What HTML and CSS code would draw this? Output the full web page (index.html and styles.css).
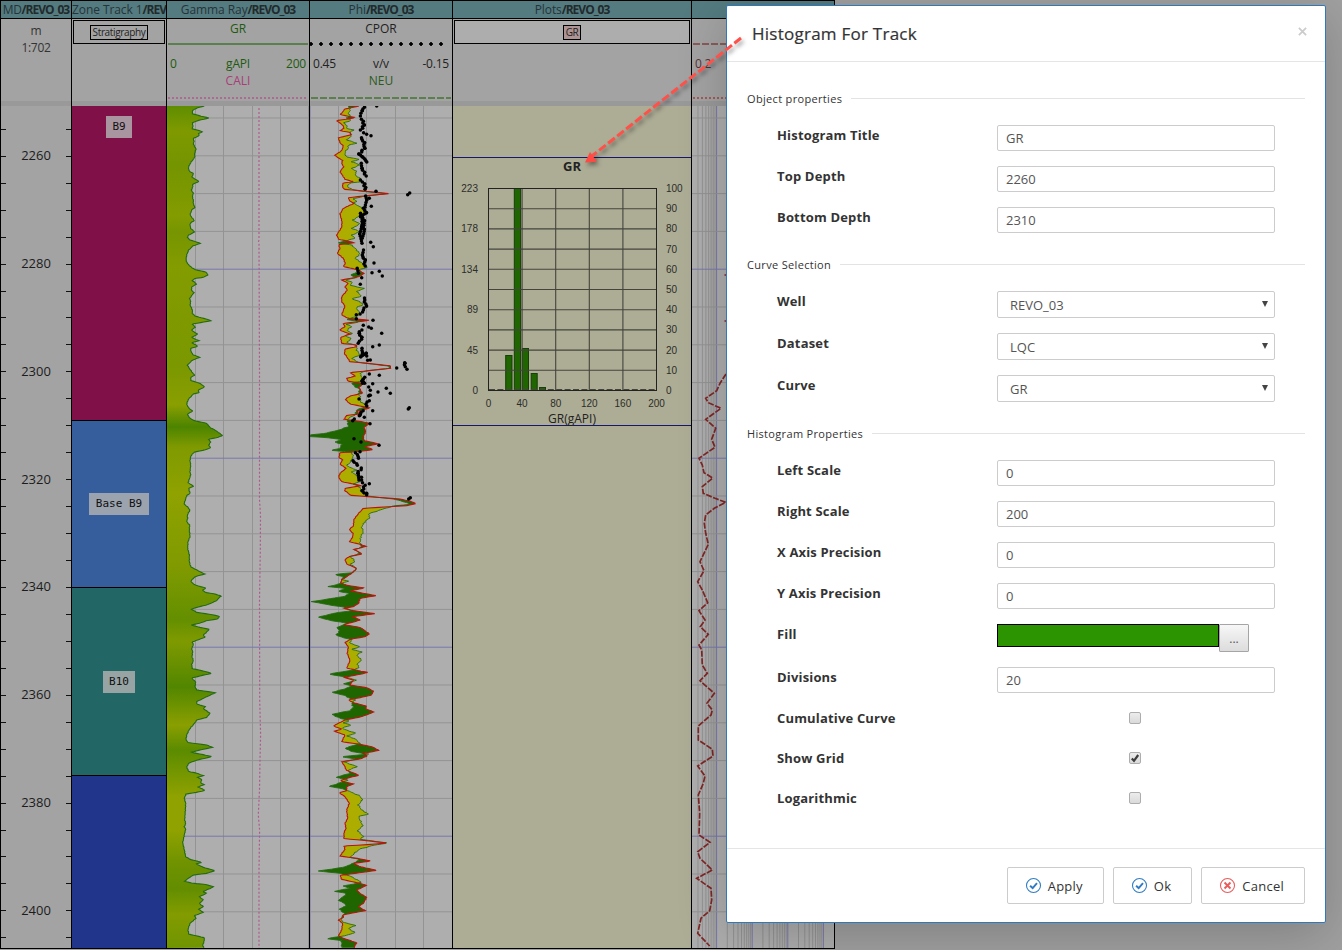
FILE: index.html
```html
<!DOCTYPE html>
<html lang="en">
<head>
<meta charset="utf-8">
<title>Histogram For Track</title>
<link rel="stylesheet" href="styles.css">
</head>
<body>
<main class="log">
  <section class="track">
    <h2 class="track-title"><span>MD</span><b>/REVO_03</b></h2>
    <div class="track-head depth-head"><span>m</span><span>1:702</span></div>
    <svg class="track-body plain" viewBox="1 106 70 842" id="depth"></svg>
  </section>
  <section class="track">
    <h2 class="track-title left"><span>Zone Track 1</span><b>/REVO_03</b></h2>
    <div class="track-head"><div class="legend"><span class="chip">Stratigraphy</span></div></div>
    <div class="track-body zones">
      <div class="zone z1"><span>B9</span></div>
      <div class="zone z2"><span>Base B9</span></div>
      <div class="zone z3"><span>B10</span></div>
      <div class="zone z4"></div>
    </div>
  </section>
  <section class="track">
    <h2 class="track-title"><span>Gamma Ray</span><b>/REVO_03</b></h2>
    <div class="track-head">
      <div class="curve gr"><span>GR</span></div>
      <hr class="line solid">
      <div class="scale gr"><span>0</span><span>gAPI</span><span>200</span></div>
      <div class="curve second cali"><span>CALI</span></div>
      <hr class="line dots">
    </div>
    <svg class="track-body" viewBox="167 106 142 842" id="gamma">
      <defs>
        <linearGradient id="grFill" gradientUnits="userSpaceOnUse" x1="0" y1="106" x2="0" y2="948">
          <stop offset="0" stop-color="#5f8d00"/><stop offset=".03" stop-color="#7f9a00"/>
          <stop offset=".07" stop-color="#749400"/><stop offset=".13" stop-color="#839c00"/>
          <stop offset=".15" stop-color="#769500"/><stop offset=".19" stop-color="#839c00"/>
          <stop offset=".31" stop-color="#7b9800"/><stop offset=".355" stop-color="#8a9f00"/>
          <stop offset=".381" stop-color="#4c8400"/><stop offset=".405" stop-color="#7f9a00"/>
          <stop offset=".46" stop-color="#8fa200"/><stop offset=".55" stop-color="#7f9a00"/>
          <stop offset=".61" stop-color="#648f00"/><stop offset=".635" stop-color="#7f9a00"/>
          <stop offset=".69" stop-color="#528600"/><stop offset=".735" stop-color="#8a9f00"/>
          <stop offset=".765" stop-color="#5b8b00"/><stop offset=".82" stop-color="#8fa200"/>
          <stop offset=".86" stop-color="#8fa200"/><stop offset=".9" stop-color="#6f9200"/>
          <stop offset=".93" stop-color="#638e00"/><stop offset=".96" stop-color="#839c00"/>
          <stop offset="1" stop-color="#6f9400"/>
        </linearGradient>
      </defs>
    </svg>
  </section>
  <section class="track">
    <h2 class="track-title"><span>Phi</span><b>/REVO_03</b></h2>
    <div class="track-head">
      <div class="curve"><span>CPOR</span></div>
      <hr class="line balls">
      <div class="scale"><span>0.45</span><span>v/v</span><span>-0.15</span></div>
      <div class="curve second neu"><span>NEU</span></div>
      <hr class="line dashes">
    </div>
    <svg class="track-body" viewBox="310 106 142 842" id="phi"></svg>
  </section>
  <section class="track">
    <h2 class="track-title"><span>Plots</span><b>/REVO_03</b></h2>
    <div class="track-head"><div class="legend wide"><span class="chip pink">GR</span></div></div>
    <svg class="track-body plots" viewBox="453 106 238 842" id="plots"></svg>
  </section>
  <section class="track">
    <h2 class="track-title"></h2>
    <div class="track-head">
      <div class="curve"></div>
      <hr class="line reddash">
      <div class="scale dim"><span>0.2</span></div>
      <div class="curve second"></div>
      <hr class="line reddots">
    </div>
    <svg class="track-body" viewBox="692 106 142 842" id="res"></svg>
  </section>
</main>

<div class="dialog" role="dialog">
  <header class="dialog-head">
    <h1>Histogram For Track</h1>
    <svg class="close" viewBox="0 0 10 10"><path d="M1 1l8 8M9 1L1 9"/></svg>
  </header>
  <form class="dialog-body">
    <h3 class="group"><span>Object properties</span></h3>
    <div class="row"><label>Histogram Title</label><div class="field">GR</div></div>
    <div class="row"><label>Top Depth</label><div class="field">2260</div></div>
    <div class="row"><label>Bottom Depth</label><div class="field">2310</div></div>
    <h3 class="group"><span>Curve Selection</span></h3>
    <div class="row"><label>Well</label><div class="field select">REVO_03</div></div>
    <div class="row"><label>Dataset</label><div class="field select">LQC</div></div>
    <div class="row"><label>Curve</label><div class="field select">GR</div></div>
    <h3 class="group"><span>Histogram Properties</span></h3>
    <div class="row"><label>Left Scale</label><div class="field">0</div></div>
    <div class="row"><label>Right Scale</label><div class="field">200</div></div>
    <div class="row"><label>X Axis Precision</label><div class="field">0</div></div>
    <div class="row"><label>Y Axis Precision</label><div class="field">0</div></div>
    <div class="row"><label>Fill</label><div class="picker"><i class="swatch"></i><span class="more">...</span></div></div>
    <div class="row"><label>Divisions</label><div class="field">20</div></div>
    <div class="row check"><label>Cumulative Curve</label><i class="box"></i></div>
    <div class="row check"><label>Show Grid</label><i class="box"><svg viewBox="0 0 10 10"><path d="M1.8 5.4L4 7.8L8.2 2"/></svg></i></div>
    <div class="row check"><label>Logarithmic</label><i class="box"></i></div>
  </form>
  <footer class="dialog-foot">
    <div class="btn"><svg viewBox="0 0 16 16"><circle cx="8" cy="8" r="6.6"/><path class="bold" d="M4.8 8.2L7.2 10.4L11.3 5.7"/></svg><span>Apply</span></div>
    <div class="btn"><svg viewBox="0 0 16 16"><circle cx="8" cy="8" r="6.6"/><path class="bold" d="M4.8 8.2L7.2 10.4L11.3 5.7"/></svg><span>Ok</span></div>
    <div class="btn cancel"><svg viewBox="0 0 16 16"><circle cx="8" cy="8" r="6.6"/><path class="bold" d="M5.2 5.2l5.6 5.6M10.8 5.2l-5.6 5.6"/></svg><span>Cancel</span></div>
  </footer>
</div>

<svg class="arrow" viewBox="570 25 185 150">
  <path class="shaft" d="M741 38L592 156"/>
  <path class="tip" d="M585 162.5L590 152L597 161.8Z"/>
</svg>
<script src="tracks.js"></script>
</body>
</html>
```
FILE: styles.css
```css
* { box-sizing: border-box; }
body {
  margin: 0;
  height: 950px;
  overflow: hidden;
  position: relative;
  background: #a0a0a0;
  font-family: "Open Sans", "Noto Sans", sans-serif;
  color: #222;
}

/* log tracks */
.log {
  display: grid;
  grid-template-columns: 72px 95px 143px 143px 239px 143px;
  width: 835px;
  height: 949px;
  border-top: 1px solid #000;
  border-bottom: 1px solid #000;
}
.track {
  display: flex;
  flex-direction: column;
  min-width: 0;
  overflow: hidden;
  border-right: 1px solid #000;
}
.track:first-child { border-left: 1px solid #000; }
.track-title {
  flex: none;
  display: flex;
  justify-content: center;
  height: 18px;
  margin: 0;
  border-bottom: 1px solid #000;
  background: #537b80;
  color: #263338;
  font-size: 12px;
  line-height: 18px;
  font-weight: 400;
  letter-spacing: -.08px;
  white-space: nowrap;
  overflow: hidden;
}
.track-title.left { justify-content: flex-start; }
.track-title b { color: #222a2c; font-weight: 700; letter-spacing: -1px; }
.track:first-child .track-title { letter-spacing: -.4px; }
.track-head {
  flex: none;
  height: 87px;
  background: #a3a3a3;
  border-bottom: 5px solid #999;
  font-size: 12px;
}
.depth-head {
  display: flex;
  flex-direction: column;
  align-items: center;
  padding-top: 4px;
  line-height: 16.5px;
  letter-spacing: -.3px;
  color: #333;
}
.track-body { flex: none; display: block; width: 100%; height: 842px; background: #aeaeae; }
.plain { background: #a3a3a3; }
.plots { background: #adad96; }

.legend {
  display: flex;
  align-items: center;
  justify-content: center;
  height: 24px;
  margin: 1px 1px 0;
  border: 1px solid #000;
}
.legend.wide { background: #adadad; }
.chip {
  height: 15px;
  padding: 0 2px;
  border: 1px solid #000;
  font-size: 10px;
  line-height: 13px;
  letter-spacing: -.35px;
}
.chip.pink { background: #ad9393; }

.curve { height: 24px; padding-top: 2px; text-align: center; line-height: 16px; }
.curve.second { height: 24px; padding-top: 0; }
.gr { color: #1f5a10; }
.cali { color: #a83d78; }
.neu { color: #2d5a1d; }
.scale {
  display: grid;
  grid-template-columns: 1fr auto 1fr;
  height: 18px;
  padding: 0 3px;
  line-height: 18px;
  margin-top: 10px;
  letter-spacing: -.2px;
}
.scale span:nth-child(3) { text-align: right; }
.scale.dim { color: #5a3434; }
.line { height: 2px; margin: 0 1px; border: 0; }
.solid { background: #5c7f50; }
.dots { background: repeating-linear-gradient(90deg, #ae6a90 0 2px, transparent 2px 4px); }
.dashes { background: repeating-linear-gradient(90deg, #5c7f50 0 7px, transparent 7px 9px); }
.reddash { background: repeating-linear-gradient(90deg, #8b5a5a 0 7px, transparent 7px 9px); }
.reddots { background: repeating-linear-gradient(90deg, #a35a5a 0 2px, transparent 2px 4px); }
.balls {
  height: 4px;
  margin: -1px 8px -1px 0;
  background: radial-gradient(circle at 5px 2px, #000 1.5px, transparent 2px) -4px 0 / 10px 4px repeat-x;
}

.zones { display: flex; flex-direction: column; }
.zone {
  display: flex;
  justify-content: center;
  align-items: center;
  border-bottom: 1px solid #000;
  font: 11px/21px "DejaVu Sans Mono", monospace;
  color: #111;
}
.zone span { height: 22px; padding: 0 7px; background: rgba(178, 178, 178, .82); }
.z1 { height: 315px; align-items: flex-start; padding-top: 10px; background: #7f1148; }
.z1 span { padding: 0 6px; }
.z2 { height: 167px; background: #365e9c; }
.z3 { height: 188px; background: #226666; }
.z3 span { padding: 0 6px; }
.z4 { flex: 1; border: 0; background: #21368a; }

/* drawings inside the tracks */
.grid { fill: none; stroke: #939393; stroke-width: 1; }
.major { fill: none; stroke: #7878ae; stroke-width: 1; }
.edge { opacity: .5; }
.tick { stroke: #111; stroke-width: 1; }
.depth-label { font-size: 13px; fill: #1c1c1c; text-anchor: middle; }
.gr-line { fill: none; stroke: #246b12; stroke-width: 1.1; }
.neu-line { fill: none; stroke: #246b12; stroke-width: .9; }
.den-line { fill: none; stroke: #b8160c; stroke-width: 1.1; }
.yellow { fill: #adad00; }
.green { fill: #1f6600; }
.cali-line { fill: none; stroke: #b05a8c; stroke-width: 1.2; stroke-dasharray: 2 2; }
.res-line { fill: none; stroke: #802626; stroke-width: 1.7; stroke-dasharray: 6 1.5; }
.frame { fill: none; stroke: #222; stroke-width: 1; }
.hgrid { fill: none; stroke: #44443d; stroke-width: 1.1; }
.bar { fill: #1f6600; stroke: #173f08; stroke-width: 1; }
.bound { stroke: #171770; stroke-width: 1; }
.axis { font: 10px "Liberation Sans", Arial, sans-serif; fill: #2c2c28; }
.end { text-anchor: end; }
.mid { text-anchor: middle; }
.plot-title { font-size: 13px; font-weight: 700; fill: #222; text-anchor: middle; }
.plot-x { font-size: 12px; fill: #222; text-anchor: middle; }

/* dialog */
.dialog {
  position: absolute;
  left: 726px;
  top: 5px;
  width: 600px;
  height: 918px;
  border: 1px solid #2f78b9;
  border-radius: 2px;
  background: #fff;
  box-shadow: 0 12px 50px rgba(0, 0, 0, .2);
  color: #333;
}
.dialog-head {
  display: flex;
  justify-content: space-between;
  height: 56px;
  padding: 0 18px 0 25px;
  border-bottom: 1px solid #e5e5e5;
}
.dialog-head h1 { margin: 0; font-size: 17px; font-weight: 400; line-height: 55px; letter-spacing: .25px; -webkit-text-stroke: .2px #333; }
.close { width: 9px; height: 9px; margin-top: 21px; fill: none; stroke: #ccc; stroke-width: 2; }
.dialog-body { height: 787px; padding: 27px 20px 0; border-bottom: 1px solid #e5e5e5; }
.group {
  display: flex;
  align-items: center;
  gap: 9px;
  height: 18px;
  margin: 22px 0 18px;
  font-size: 11px;
  font-weight: 400;
  letter-spacing: .33px;
}
.group:first-child { margin-top: 0; }
.group::after { content: ""; flex: 1; height: 1px; background: #e3e3e3; }
.row {
  display: grid;
  grid-template-columns: 220px 278px;
  align-items: start;
  margin-bottom: 15px;
  padding-left: 30px;
}
.row label { font-size: 13px; font-weight: 700; line-height: 20px; letter-spacing: .17px; color: #333; }
.field {
  height: 26px;
  padding-left: 8px;
  border: 1px solid #ccc;
  border-radius: 2px;
  font-size: 13px;
  line-height: 24px;
  color: #555;
}
.select { display: flex; justify-content: space-between; height: 27px; padding: 0 6px 0 12px; line-height: 27px; }
.select::after {
  content: "";
  width: 6px;
  height: 6px;
  margin-top: 9px;
  background: #444;
  clip-path: polygon(0 0, 100% 0, 50% 100%);
}
.picker { display: flex; align-items: flex-start; height: 28px; }
.swatch { width: 222px; height: 23px; border: 1px solid #000; background: #2b9400; }
.more {
  width: 30px;
  height: 28px;
  border: 1px solid #a5a5a5;
  border-radius: 1px;
  background: linear-gradient(#f7f7f7, #dcdcdc);
  font-size: 12px;
  line-height: 28px;
  text-align: center;
  color: #555;
}
.check { height: 40px; margin: 0; }
.box {
  justify-self: center;
  width: 12px;
  height: 12px;
  margin: 4px 2px 0 0;
  border: 1px solid #adadad;
  border-radius: 2px;
  background: linear-gradient(#ececec, #dadada);
}
.box svg { display: block; width: 10px; height: 10px; fill: none; stroke: #3c3c3c; stroke-width: 2.2; }
.dialog-foot { display: flex; justify-content: flex-end; gap: 9px; padding: 18px 20px 0; }
.btn {
  display: flex;
  align-items: center;
  gap: 6px;
  height: 37px;
  padding: 0 20px 0 17px;
  border: 1px solid #ccc;
  border-radius: 2px;
  font-size: 13px;
  letter-spacing: .25px;
}
.btn svg { width: 17px; height: 17px; fill: none; stroke: #2f7cc4; stroke-width: 1; }
.bold { stroke-width: 1.8; }
.btn.cancel svg { stroke: #ea5b5b; }

/* pointer drawn across the log and the dialog */
.arrow {
  position: absolute;
  left: 570px;
  top: 25px;
  width: 185px;
  height: 150px;
  filter: drop-shadow(2px 3px 2px rgba(0, 0, 0, .4));
}
.shaft { fill: none; stroke: #ff5049; stroke-width: 3; stroke-dasharray: 8.5 3; }
.tip { fill: #ff4a44; }
```
FILE: tracks.js
```js
const NS = "http://www.w3.org/2000/svg";
const $ = id => document.getElementById(id);
function add(parent, tag, attrs, text) {
  const el = document.createElementNS(NS, tag);
  for (const k in attrs) el.setAttribute(k, attrs[k]);
  if (text !== undefined) el.textContent = text;
  parent.appendChild(el);
}
// samples are stored in thirds of a pixel, relative to an origin
function read(text, ox, oy) {
  return text.trim().split(/\s+/).map(p => {
    const [x, y] = p.split(",").map(Number);
    return [ox + x / 3, oy + y / 3];
  });
}
const join = (...parts) => parts.map((t, i) => read(t, 160, 100 + 280 * i)).flat();
const path = pts => "M" + pts.map(p => p[0].toFixed(1) + " " + p[1].toFixed(1)).join("L");
function at(pts, y) {
  for (let i = 1; i < pts.length; i++) if (y <= pts[i][1]) {
    const a = pts[i - 1], b = pts[i];
    const t = Math.max(0, Math.min(1, (y - a[1]) / (b[1] - a[1] || 1)));
    return a[0] + (b[0] - a[0]) * t;
  }
  return pts[pts.length - 1][0];
}
// small regular ripple so the trace keeps its sampled texture
function trace(pts, amp) {
  const out = [];
  for (let y = 106; y <= 948; y += .6)
    out.push([at(pts, y) + amp * (Math.sin(y * 1.7) + Math.sin(y * 2.9 + 1)) * .5, y]);
  return out;
}
function gridRows(svg, x0, x1) {
  for (let i = 0; i < 23; i++) {
    const y = 118 + i * 37.8;
    if (y < 948) add(svg, "path", { class: i % 5 === 4 ? "major" : "grid", d: `M${x0} ${y.toFixed(1)}H${x1}` });
  }
}

// depth scale
for (let i = 0; i < 31; i++) {
  const y = Math.round(128.8 + i * 26.95) + .5;
  add($("depth"), "path", { class: "tick", d: `M0 ${y}H6M66 ${y}H71` });
}
for (let i = 0; i < 8; i++)
  add($("depth"), "text", { class: "depth-label", x: 36, y: Math.round(160.3 + i * 107.75) }, 2260 + 20 * i);

// gamma ray
const gr = trace(join(
`133,18 110,24 97,32 97,41 125,49 147,54 120,60 97,68 99,78 96,86 128,95 115,101 118,107 100,115 102,125 100,132 108,147 104,160 104,172 92,188 85,202 88,214 100,220 96,232 117,244 98,253 98,262 94,270 100,280 97,290 100,300 100,312 105,322 95,330 90,345 103,362 92,368 90,376 92,385 104,396 86,405 82,412 90,420 122,430 100,437 86,450 80,465 78,480 82,490 95,503 108,510 138,516 144,525 130,532 105,535 97,542 110,552 96,560 94,570 102,578 94,588 89,596 92,605 90,615 97,630 97,640 105,648 130,655 155,662 120,668 97,672 106,682 94,690 113,703 94,712 117,722 95,728 114,739 92,745 93,755 100,765 120,772 98,780 82,795 88,805 95,815 104,826 92,832`,
`93,2 120,10 134,21 115,30 117,38 100,42 85,58 80,72 86,84 98,93 82,103 90,115 103,122 140,130 150,142 168,152 188,167 170,173 145,178 152,186 146,195 152,203 135,210 103,216 93,227 90,240 92,255 90,275 92,285 87,300 84,308 101,319 86,325 90,340 80,347 76,360 72,372 82,380 90,390 82,405 83,415 80,425 89,435 88,450 90,470 84,485 83,505 88,525 88,545 92,560 110,570 134,582 105,590 92,604 105,615 138,624 128,630 135,637 165,642 183,648 168,663 140,675 110,682 94,688 110,697 150,703 179,709 172,717 140,722 118,730 94,735 115,741 148,748 138,758 130,765 135,772 115,779 97,786 100,795 95,805 98,815 96,830`,
`100,2 95,14 97,26 130,33 155,40 120,48 95,54 107,66 105,80 110,90 167,98 140,110 110,125 110,132 136,140 130,146 150,160 140,172 110,180 105,188 88,208 80,225 78,240 85,248 140,255 158,262 120,270 93,277 130,284 156,290 120,298 88,308 80,320 86,335 105,338 131,347 112,352 125,358 122,368 132,374 114,381 136,391 110,397 78,402 73,415 77,430 76,450 74,480 77,490 73,500 77,508 74,520 68,548 73,570 77,590 90,598 125,607 108,612 130,622 165,632 140,640 100,645 85,655 73,664 100,670 135,673 161,680 140,690 128,695 140,700 118,710 130,720 118,730 130,740 116,748 130,757 103,767 108,775 90,790 84,808 86,822 110,828 133,833 132,845 128,855 132,866`), .3);
add($("gamma"), "path", { class: "grid", d: "M195.5 106V948M223.5 106V948M252.5 106V948M280.5 106V948M308.5 106V948" });
gridRows($("gamma"), 167, 309);
add($("gamma"), "path", { fill: "url(#grFill)", d: path([[167, 106], ...gr, [167, 948]]) + "Z" });
add($("gamma"), "path", { class: "gr-line", d: path(gr) });
add($("gamma"), "path", { class: "cali-line", d: "M259 108V240L258.4 242L259 244L259.5 370V500L260.5 515L260.3 550L259.5 600L259.7 700L260.6 735L260 760L259.5 790L258.3 815L259.6 830L259 870V948" });

// porosity
const den = trace(join(
`597,18 555,27 541,44 587,53 530,62 548,75 552,85 540,92 570,97 572,105 535,113 540,128 550,138 545,152 524,166 548,182 545,190 551,200 540,215 550,230 555,238 580,245 550,249 547,258 552,268 600,272 687,281 600,289 566,293 568,302 582,310 550,325 540,342 546,365 545,382 530,405 536,418 585,428 536,434 540,445 532,460 550,475 556,490 550,500 580,506 598,512 612,520 597,530 545,540 565,550 555,560 562,570 545,590 545,605 555,618 545,645 565,655 632,661 550,670 555,680 538,690 570,702 542,712 545,730 590,735 590,740 556,747 553,760 560,770 570,785 690,797 692,805 570,818 586,828 560,835`,
`565,4 610,10 597,22 607,40 570,48 556,58 570,72 600,78 630,84 590,94 600,102 560,106 552,118 600,124 628,130 612,142 617,155 610,170 612,182 655,191 615,200 640,209 600,214 540,218 537,232 548,240 540,252 558,265 540,280 536,292 545,305 580,312 605,317 555,325 555,332 572,346 720,357 755,365 767,371 740,377 610,385 596,400 582,418 580,438 568,448 580,462 576,475 568,485 600,493 619,499 582,508 607,522 570,529 555,538 560,552 590,565 575,580 545,600 542,608 560,616 614,624 570,632 600,638 648,647 600,655 596,670 580,680 550,685 580,692 645,701 578,710 602,720 550,734 600,742 612,750 628,762 615,770 570,778 555,788 565,800 562,820`,
`570,2 560,24 600,33 624,37 590,45 550,52 580,60 570,75 620,83 640,93 635,105 600,113 565,119 580,128 618,138 618,147 642,156 605,170 555,180 535,190 520,198 545,207 523,214 555,225 545,245 600,253 635,260 657,271 610,280 622,288 600,297 545,305 555,320 558,330 598,346 570,352 540,362 580,372 560,380 560,392 538,398 555,410 568,430 560,450 563,475 555,490 558,505 552,518 552,536 610,541 683,549 620,554 552,558 555,568 540,588 590,595 634,603 580,610 600,620 650,631 600,638 540,646 545,658 590,668 620,676 590,690 600,700 620,712 610,730 595,740 616,752 550,764 550,772 535,780 548,790 545,810 535,828 550,835 590,848 580,866`), .35);
const neu = trace(join(
`565,18 572,30 565,38 570,48 560,54 575,62 550,68 560,75 560,85 580,90 570,97 575,107 560,120 592,130 565,135 565,145 555,155 557,170 598,178 575,185 600,195 575,205 590,215 585,225 600,235 607,245 575,248 560,258 575,268 600,273 680,281 605,290 580,297 590,304 580,310 600,320 618,328 612,340 578,360 600,372 575,385 600,395 575,405 585,415 560,422 533,429 575,435 590,450 600,462 585,475 600,485 622,503 600,508 596,515 570,525 590,532 558,540 578,548 570,556 612,565 590,575 605,588 575,597 600,605 610,615 588,622 600,640 590,650 557,658 600,665 560,673 575,680 560,690 576,700 555,708 575,716 560,727 590,738 590,750 600,765 575,775 595,787 685,798 690,805 620,812 600,820 605,830`,
`605,2 575,10 585,20 600,28 595,40 600,50 602,65 620,78 590,90 585,105 565,115 562,123 565,140 530,152 495,160 450,165 450,170 490,172 545,178 525,186 545,193 540,205 515,211 575,217 580,230 572,245 560,258 590,270 575,276 595,290 600,305 580,312 600,322 605,338 620,348 700,357 735,366 750,373 700,378 660,390 625,402 630,412 615,425 605,440 610,455 603,468 600,488 605,500 585,510 600,520 570,530 580,538 585,545 570,552 590,565 580,578 523,583 550,590 545,598 565,604 540,611 505,620 555,625 535,635 570,640 550,650 510,656 455,665 510,675 550,681 575,692 520,700 474,712 520,723 565,730 540,738 530,745 540,752 528,765 545,772 575,778 570,790 600,800 575,808 605,816 590,825`,
`605,1 592,10 597,24 570,32 505,42 550,50 590,60 550,72 575,78 550,88 515,97 550,105 570,115 585,120 575,130 580,142 570,152 515,163 540,175 570,182 550,188 573,195 545,205 565,212 588,220 560,228 585,236 600,251 555,264 575,275 625,282 545,290 590,298 550,305 592,320 565,330 570,340 527,352 565,360 508,379 550,387 570,395 600,408 607,420 595,435 605,450 625,462 595,470 605,490 608,498 593,512 610,530 600,538 683,549 640,556 600,567 585,578 570,593 600,598 580,610 550,622 475,633 540,640 570,648 605,667 550,678 570,685 522,694 560,700 550,710 535,720 560,735 538,748 555,762 545,770 545,785 587,797 565,805 585,818 560,826 500,836 545,842 545,855 545,866`), .9);
const phi = $("phi");
add(phi, "path", { class: "grid", d: "M338.5 106V948M366.5 106V948M395.5 106V948M423.5 106V948" });
add(phi, "path", { class: "major edge", d: "M310.5 106V948" });
gridRows(phi, 310, 452);
const back = den.slice().reverse();
add(phi, "path", { class: "yellow", d: path([...den.map((p, i) => [Math.max(p[0], neu[i][0]), p[1]]), ...back]) + "Z" });
add(phi, "path", { class: "green", d: path([...den.map((p, i) => [Math.min(p[0], neu[i][0]), p[1]]), ...back]) + "Z" });
add(phi, "path", { class: "neu-line", d: path(neu) });
add(phi, "path", { class: "den-line", d: path(den) });

// core porosity: runs of close samples, then single ones
const runs = [
  "614,22 605,32 603,48", "606,58 612,75 603,90", "612,98 618,103", "603,113 612,128 613,145 598,162 605,170 622,186",
  "606,190 606,205 618,228", "603,240 612,252 617,268", "615,288 622,300 616,322", "612,325 618,338 604,350 612,362 603,380 598,402 604,430",
  "602,340 610,370 612,388 606,415", "612,450 606,465 614,480 614,498", "612,594 618,618 602,642", "604,690 596,700 606,712 596,730", "608,745 604,770 618,760 618,768",
  "590,505 596,520", "735,788 734,800", "612,832 606,850"];
const runs2 = ["605,2 612,10", "620,66 620,78", "608,92 598,106", "588,218 597,235", "580,242 592,256", "606,264 592,280 598,300", "606,292 606,308", "614,316 608,332 618,344"];
const dots = "650,18 633,107 743,284 749,279 648,274 628,295 634,319 632,427 640,440 642,489 658,514 636,518 667,528 605,533 601,553 589,644 589,656 639,661 610,676 626,681 634,685 665,700 658,735 638,740 631,780 623,781 710,804 741,808 735,790 658,826 628,822 638,851 626,861 679,865 631,871 654,876 691,880 631,886 626,888";
const dots2 = "597,57 628,62 745,87 748,83 638,92 613,112 583,117 578,122 630,131 582,176 603,186 657,196 600,215 598,107 628,311 746,357 751,353 628,46 620,340";
const core = [];
function spread(list, oy) {
  list.forEach(r => {
    const p = read(r, 160, oy);
    for (let i = 1; i < p.length; i++) {
      const n = Math.max(1, Math.round(Math.hypot(p[i][0] - p[i - 1][0], p[i][1] - p[i - 1][1]) / 2.2));
      for (let k = 0; k <= n; k++) {
        const y = p[i - 1][1] + (p[i][1] - p[i - 1][1]) * k / n;
        core.push([p[i - 1][0] + (p[i][0] - p[i - 1][0]) * k / n + Math.sin(y * 5.3) * .7, y]);
      }
    }
  });
}
spread(runs, 100); spread(runs2, 380);
core.push(...read(dots, 160, 100), ...read(dots2, 160, 380));
core.forEach(c => add(phi, "circle", { cx: c[0].toFixed(1), cy: c[1].toFixed(1), r: 1.75 }));

// histogram plot
const plots = $("plots");
add(plots, "path", { class: "bound", d: "M453 157.5H691M453 425.5H691" });
add(plots, "text", { class: "plot-title", x: 572, y: 171 }, "GR");
[[505.7, 355.5, 6.3], [514.3, 188.5, 6.3], [522.5, 348.5, 6], [531.2, 373.5, 6], [539.5, 387.5, 6]].forEach(b =>
  add(plots, "rect", { class: "bar", x: b[0], y: b[1], width: b[2], height: 390.5 - b[1] }));
let h = "";
for (let i = 1; i < 10; i++) h += `M488.5 ${(188.5 + 20.2 * i).toFixed(1)}H656.5`;
for (let i = 1; i < 5; i++) h += `M${(488.5 + 33.6 * i).toFixed(1)} 188.5V390.5`;
add(plots, "path", { class: "hgrid", d: h });
add(plots, "path", { class: "hgrid", "stroke-dasharray": "6 2.4", d: "M489 389.5H656" });
add(plots, "rect", { class: "frame", x: 488.5, y: 188.5, width: 168, height: 202 });
[223, 178, 134, 89, 45, 0].forEach((v, i) => add(plots, "text", { class: "axis end", x: 478, y: 192 + 40.4 * i }, v));
for (let i = 0; i <= 10; i++) add(plots, "text", { class: "axis", x: 666, y: 192 + 20.2 * i }, 100 - 10 * i);
for (let i = 0; i <= 5; i++) add(plots, "text", { class: "axis mid", x: 488.5 + 33.6 * i, y: 407 }, 40 * i);
add(plots, "text", { class: "plot-x", x: 572, y: 423 }, "GR(gAPI)");

// logarithmic track
const res = $("res");
for (let d = 0; d < 5; d++) for (let k = 1; k < 10; k++) {
  const x = 681 + 35.6 * (d + Math.log10(k));
  if (x > 693 && x < 834) add(res, "path", { class: k === 1 ? "major" : "grid", d: `M${x.toFixed(1)} 106V948` });
}
gridRows(res, 692, 834);
add(res, "path", { class: "res-line", d: path(read("123,72 105,100 95,122 62,145 70,158 108,175 80,195 62,208 92,235 80,268 90,292 42,325 52,345 57,368 83,384 52,410 55,430 90,445 122,457 88,475 62,495 58,520 62,550 70,583 45,635 57,662 38,695 52,720 68,758 42,782 60,810 46,830 70,853 42,885 50,900 52,945 67,970 45,992 88,1030 66,1060 82,1080 78,1095 40,1128 40,1170 82,1198 84,1218 38,1248 60,1278 55,1300 40,1335 44,1390 42,1455 75,1477 38,1505 45,1525 82,1560 35,1585 78,1615 80,1650 74,1682 48,1705 38,1750 74,1788", 685, 350)) });
add(res, "path", { class: "res-line", d: "M724.5 275H727M724.5 321H727" });
```
